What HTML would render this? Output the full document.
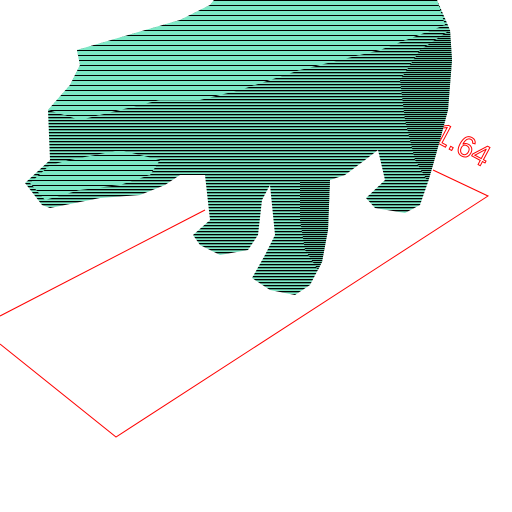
<!DOCTYPE html>
<html><head><style>html,body{margin:0;padding:0;background:#fff;width:512px;height:512px;overflow:hidden}</style></head>
<body>
<svg width="512" height="512" viewBox="0 0 512 512" xmlns="http://www.w3.org/2000/svg">
<defs>
<pattern id="d" width="4" height="3" patternUnits="userSpaceOnUse">
<rect width="4" height="3" fill="#7de8c6"/><rect y="0" width="4" height="1.3" fill="#000"/>
</pattern>
<pattern id="s" width="4" height="5" patternUnits="userSpaceOnUse">
<rect width="4" height="5" fill="#7de8c6"/><rect y="0" width="4" height="1" fill="#000"/>
</pattern>
<pattern id="k" width="4" height="2" patternUnits="userSpaceOnUse">
<rect width="4" height="2" fill="#5fb89b"/><rect y="0" width="4" height="1" fill="#000"/>
</pattern>
</defs>
<g stroke="#ff0000" stroke-width="1" fill="none">
<polyline points="0,316 205,210"/>
<polyline points="0,344 116,437 488,196 433,170"/>
</g>
<text x="432" y="140" transform="rotate(28 432 140)" font-family="Liberation Sans, sans-serif" font-size="30" fill="none" stroke="#ff0000" stroke-width="1">1.64</text>
<polygon fill="url(#d)" points="77,50 180,20 210,5 214,0 437,0 450,30 452,60 448,110 440,140 433,165 428,182 420,205 405,213 375,208 366,198 385,180 378,150 365,160 345,175 330,180 328,230 322,262 310,285 295,295 270,290 252,278 265,255 275,235 270,185 262,200 258,235 248,250 220,255 200,245 193,235 210,220 205,175 180,175 165,185 140,195 100,198 50,208 42,205 25,183 50,160 48,110 70,85 80,65"/>
<polygon fill="url(#s)" points="77,50 180,20 210,5 214,0 437,0 445,25 380,50 300,70 240,90 200,100 160,100 120,110 80,120 48,110 70,85 80,65"/>
<polygon fill="url(#k)" points="420,50 450,30 452,60 448,110 440,140 433,165 428,182 415,160 405,120 400,80"/>
<polygon fill="url(#k)" points="300,180 330,180 328,230 322,262 318,270 305,250 300,220"/>
<polygon fill="url(#s)" points="70,160 120,150 160,160 150,175 120,185 80,190 45,200 30,183 50,165"/>
</svg>
</body></html>
